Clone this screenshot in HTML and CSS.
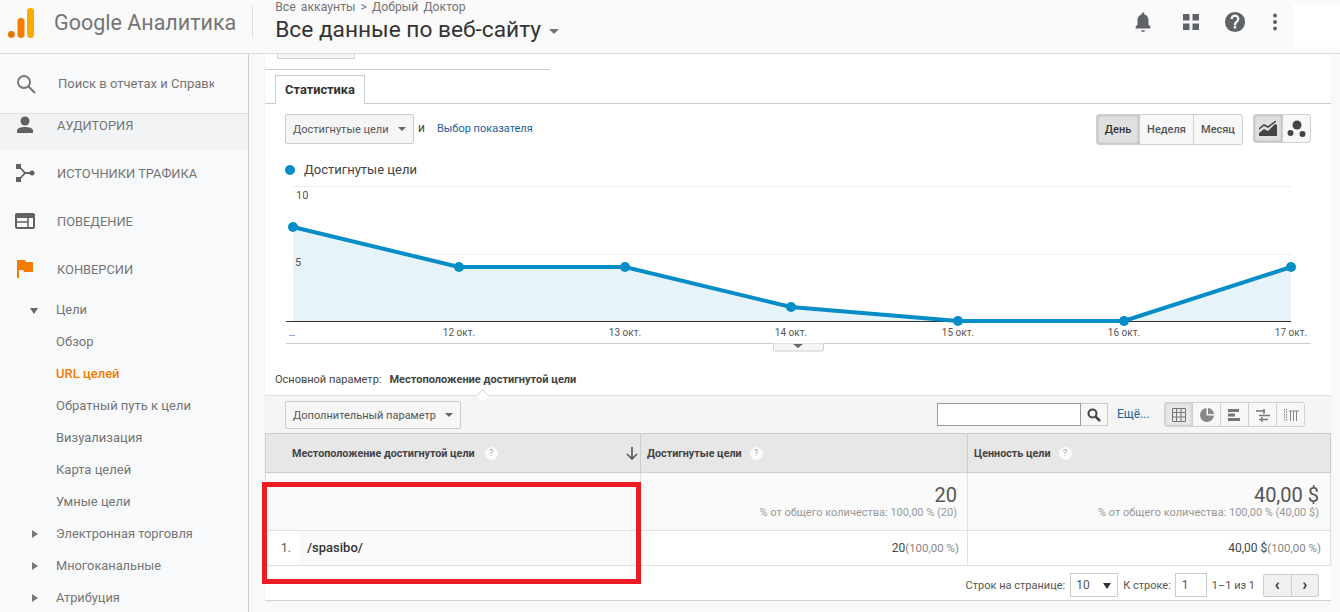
FILE: index.html
```html
<!DOCTYPE html>
<html lang="ru">
<head>
<meta charset="utf-8">
<title>Google Аналитика</title>
<link rel="stylesheet" href="styles.css">
</head>
<body>
<header class="topbar">
  <svg class="logo" viewBox="0 0 26 30" width="26" height="30"><circle cx="3.4" cy="26.4" r="3.4" fill="#e37400"/><rect x="9.5" y="10" width="7" height="20" rx="3.4" fill="#f57c00"/><rect x="19" y="0" width="7" height="30" rx="3.4" fill="#f9ab00"/></svg>
  <span class="brand">Google Аналитика</span>
  <div class="divider"></div>
  <div class="account">
    <div class="crumbs">Все аккаунты &gt; Добрый Доктор</div>
    <div class="view-name">Все данные по веб-сайту <span class="caret-big"></span></div>
  </div>
  <div class="top-icons">
    <svg width="22" height="24" viewBox="0 0 24 24"><path fill="#5f6368" d="M12 23a2.2 2.2 0 0 0 2.2-2h-4.4A2.2 2.2 0 0 0 12 23zm8-6-2-2V10c0-3-1.600-5.500-4.500-6.200V3a1.500 1.500 0 0 0-3 0v.8C7.600 4.500 6 7 6 10v5l-2 2v2h16z"/></svg>
    <svg class="apps" width="18" height="18" viewBox="0 0 18 18"><path fill="#5f6368" d="M1 1h6.500v6.500H1zM10.500 1H17v6.500h-6.500zM1 10.500h6.500V17H1zM10.500 10.500H17V17h-6.500z"/></svg>
    <svg width="22" height="22" viewBox="0 0 24 24"><path fill="#5f6368" d="M12 1a11 11 0 1 0 0 22 11 11 0 0 0 0-22zm1.300 18h-2.600v-2.600h2.600zm2.500-7.700-1.100 1.200c-.9.900-1.400 1.600-1.400 3h-2.600v-.6c0-1.200.5-2.200 1.400-3.100l1.500-1.500c.5-.4.700-1 .7-1.700a2.300 2.300 0 0 0-4.600 0H7.200a4.800 4.800 0 0 1 9.600 0c0 1.100-.4 2-1 2.700z"/></svg>
    <svg width="6" height="18" viewBox="0 0 6 18"><circle cx="3" cy="2.500" r="2" fill="#5f6368"/><circle cx="3" cy="9" r="2" fill="#5f6368"/><circle cx="3" cy="15.500" r="2" fill="#5f6368"/></svg>
  </div>
  <div class="user-box"></div>
</header>
<div class="page">
  <aside class="sidebar">
    <div class="search-row">
      <svg width="20" height="20" viewBox="0 0 20 20"><circle cx="8" cy="8" r="6" fill="none" stroke="#757575" stroke-width="1.800"/><path d="M12.500 12.500 19 19" stroke="#757575" stroke-width="2"/></svg>
      <span class="search-text">Поиск в отчетах и Справк</span>
    </div>
    <div class="nav-top nav-clipped">
      <svg width="18" height="18" viewBox="0 0 18 18"><circle cx="9" cy="5" r="4.500" fill="#616161"/><path fill="#616161" d="M1 17v-2.500C1 12 5.500 11 9 11s8 1 8 3.500V17z"/></svg>
      <span>АУДИТОРИЯ</span>
    </div>
    <div class="nav-top">
      <svg width="20" height="20" viewBox="0 0 20 20"><path fill="none" stroke="#616161" stroke-width="1.800" d="M4 3.500 10 10l-6 6.500M10 10h7"/><rect x="1" y="1" width="5" height="5" fill="#616161"/><rect x="1" y="14" width="5" height="5" fill="#616161"/><circle cx="17" cy="10" r="2.500" fill="#616161"/></svg>
      <span>ИСТОЧНИКИ ТРАФИКА</span>
    </div>
    <div class="nav-top">
      <svg width="20" height="18" viewBox="0 0 20 18"><rect x="1" y="2" width="18" height="14" rx="1" fill="none" stroke="#616161" stroke-width="2"/><path fill="#616161" d="M1 2h18v4H1z"/><path stroke="#616161" stroke-width="1.500" d="M13 6v9M2 10h11"/></svg>
      <span>ПОВЕДЕНИЕ</span>
    </div>
    <div class="nav-top">
      <svg width="20" height="20" viewBox="0 0 20 20"><path fill="#f57c00" d="M2 1h2v18H2zM4 1h6l1 2h7v10H9l-1-2H4z"/></svg>
      <span>КОНВЕРСИИ</span>
    </div>
    <div class="nav-sub has-arrow"><i class="tri-down"></i>Цели</div>
    <div class="nav-sub">Обзор</div>
    <div class="nav-sub active">URL целей</div>
    <div class="nav-sub">Обратный путь к цели</div>
    <div class="nav-sub">Визуализация</div>
    <div class="nav-sub">Карта целей</div>
    <div class="nav-sub">Умные цели</div>
    <div class="nav-sub has-arrow"><i class="tri-right"></i>Электронная торговля</div>
    <div class="nav-sub has-arrow"><i class="tri-right"></i>Многоканальные</div>
    <div class="nav-sub has-arrow"><i class="tri-right"></i>Атрибуция</div>
  </aside>
  <main class="content">
    <section class="panel">
      <div class="stub"><div class="stub-btn"></div></div>
      <div class="tabs"><div class="tab">Статистика</div></div>
      <div class="controls">
        <div class="metric-pick">
          <div class="select select-metric">Достигнутые цели<i class="caret"></i></div>
          <span class="and">и</span>
          <a class="link">Выбор показателя</a>
        </div>
        <div class="toggles">
          <div class="btn-group">
            <div class="seg seg-day on">День</div>
            <div class="seg seg-week">Неделя</div>
            <div class="seg seg-month">Месяц</div>
          </div>
          <div class="btn-group chart-types">
            <div class="seg seg-icon on"><svg width="18" height="15" viewBox="0 0 18 15"><path fill="#444" d="M0 15V12l5-4 4 2 7-7 2 1v11z"/><path fill="none" stroke="#444" stroke-width="1.500" d="M0 8l5-4 4 2 8-6"/></svg></div>
            <div class="seg seg-icon"><svg width="20" height="18" viewBox="0 0 20 18"><circle cx="10" cy="5" r="4.500" fill="#444"/><circle cx="3.500" cy="13" r="3" fill="#444"/><circle cx="15.500" cy="14" r="3" fill="#444"/></svg></div>
          </div>
        </div>
      </div>
      <div class="legend"><i class="dot"></i>Достигнутые цели</div>
      <svg class="chart" viewBox="265 180 1066 172" width="1066" height="172">
        <path d="M293 186.500H1291M293 254.500H1291" stroke="#eee" stroke-width="1"/>
        <path d="M293 227 459 267H625L791 307 958 321H1124L1291 267V321H293Z" fill="#e6f3f9"/>
        <path d="M286 321.500H1291" stroke="#333" stroke-width="1"/>
        <path d="M293 227 459 267H625L791 307 958 321H1124L1291 267" fill="none" stroke="#058dc7" stroke-width="4"/>
        <g fill="#058dc7">
          <circle cx="293" cy="227" r="5"/><circle cx="459" cy="267" r="5"/><circle cx="625" cy="267" r="5"/><circle cx="791" cy="307" r="5"/><circle cx="958" cy="321" r="5"/><circle cx="1124" cy="321" r="5"/><circle cx="1291" cy="267" r="5"/>
        </g>
        <g class="chart-y"><text x="296" y="199">10</text><text x="295" y="266">5</text></g>
        <g class="chart-x"><text x="292" y="336">…</text><text x="459" y="336">12 окт.</text><text x="625" y="336">13 окт.</text><text x="791" y="336">14 окт.</text><text x="958" y="336">15 окт.</text><text x="1124" y="336">16 окт.</text><text x="1291" y="336">17 окт.</text></g>
        <path d="M286 343.500H1311" stroke="#ccc"/>
        <path d="M773.500 343.500v6a1.500 1.500 0 0 0 1.500 1.500h47a1.500 1.500 0 0 0 1.500-1.500v-6" fill="#f5f5f5" stroke="#d0d0d0"/>
        <path d="M793 344h10l-5 4z" fill="#666"/>
      </svg>
      <div class="primary-dim"><span class="pd-label">Основной параметр:</span><b>Местоположение достигнутой цели</b></div>
      <div class="table-tools">
        <div class="select select-extra">Дополнительный параметр<i class="caret"></i></div>
        <div class="tools-right">
          <div class="search-box"><div class="search-input"></div><div class="search-btn"><svg width="14" height="14" viewBox="0 0 14 14"><circle cx="5.500" cy="5.500" r="4" fill="none" stroke="#444" stroke-width="2"/><path d="M8.500 8.500 13 13" stroke="#444" stroke-width="2.500"/></svg></div></div>
          <a class="link more">Ещё...</a>
          <div class="btn-group view-types">
            <div class="vt on"><svg width="14" height="14" viewBox="0 0 14 14"><path fill="none" stroke="#777" d="M.5.5h13v13H.5zM.5 4.500h13M.5 9h13M4.500.5v13M9 .5v13"/></svg></div>
            <div class="vt"><svg width="14" height="14" viewBox="0 0 14 14"><path fill="#888" d="M6.500 0v7.500H14A7 7 0 1 1 6.500 0z"/><path fill="#888" d="M8 0a6.500 6.500 0 0 1 6 6H8z"/></svg></div>
            <div class="vt"><svg width="14" height="14" viewBox="0 0 14 14"><path fill="#777" d="M0 1h11v3H0zM0 5.500h7v3H0zM0 10h12v3H0z"/></svg></div>
            <div class="vt"><svg width="14" height="14" viewBox="0 0 14 14"><path fill="none" stroke="#777" stroke-width="1.500" d="M0 3h9M8 1v5M3 7.500h11M6 9v5M3 11.500h9"/></svg></div>
            <div class="vt"><svg width="16" height="12" viewBox="0 0 16 12"><path fill="none" stroke="#888" stroke-dasharray="1.500 1" d="M1.500 0v12M3.500 0v12"/><path fill="none" stroke="#888" d="M6 2h10M7.500 2v10M10.500 2v10M13.500 2v10"/></svg></div>
          </div>
        </div>
      </div>
      <div class="table">
        <div class="th th-dim"><span>Местоположение достигнутой цели</span><i class="hint">?</i><svg class="sort" width="12" height="13" viewBox="0 0 12 13"><path fill="none" stroke="#555" stroke-width="1.600" d="M6 0v12M1 7l5 5 5-5"/></svg></div>
        <div class="th"><span>Достигнутые цели</span><i class="hint">?</i></div>
        <div class="th"><span>Ценность цели</span><i class="hint">?</i></div>
        <div class="td-total td-empty"></div>
        <div class="td-total"><div class="big">20</div><div class="small">% от общего количества: 100,00 % (20)</div></div>
        <div class="td-total"><div class="big">40,00 $</div><div class="small">% от общего количества: 100,00 % (40,00 $)</div></div>
        <div class="td-row td-name"><span class="idx">1.</span><span class="path">/spasibo/</span></div>
        <div class="td-row td-val">20<small>(100,00 %)</small></div>
        <div class="td-row td-val">40,00 $<small>(100,00 %)</small></div>
      </div>
      <div class="pager">
        <span>Строк на странице:</span>
        <div class="pager-select">10<i class="pager-caret"></i></div>
        <span>К строке:</span>
        <div class="pager-input">1</div>
        <span class="pager-range">1–1 из 1</span>
        <div class="pager-nav"><div>&#8249;</div><div>&#8250;</div></div>
      </div>
    </section>
  </main>
</div>
<div class="red-frame"></div>
</body>
</html>
```
FILE: styles.css
```css
* { box-sizing: border-box; }
html, body { margin: 0; height: 612px; overflow: hidden; }
body { font-family: Roboto, "Liberation Sans", sans-serif; color: #444; background: #f8f9fa; position: relative; }
i { font-style: normal; display: block; }

.topbar { height: 54px; background: #fafafa; border-bottom: 1px solid #dcdcdc; display: flex; align-items: flex-start; position: relative; }
.logo { margin: 8px 0 0 8px; flex: none; }
.brand { margin: 10px 0 0 20px; font-size: 21.5px; line-height: 26px; color: #757575; white-space: nowrap; }
.divider { width: 1px; height: 32px; background: #e0e0e0; margin: 6px 0 0 16px; }
.account { margin-left: 22px; }
.crumbs { font-size: 12.25px; line-height: 14px; color: #757575; word-spacing: 2px; }
.view-name { font-size: 22.7px; line-height: 28px; margin-top: 2px; color: #333; white-space: nowrap; display: flex; align-items: center; }
.caret-big { width: 0; height: 0; margin: 2px 0 0 8px; border: 5px solid transparent; border-top-color: #757575; border-bottom: 0; }
.top-icons { margin-left: auto; height: 44px; display: flex; align-items: center; gap: 26px; }
.apps { margin: 0 -2px 0 2px; }
.user-box { width: 47px; height: 43px; margin: 4px 0 0 15px; background: #fff; }

.page { display: flex; height: 558px; overflow: hidden; }
.sidebar { width: 249px; flex: none; background: #f8f9fa; border-right: 1px solid #ccc; overflow: hidden; }
.search-row { height: 60px; display: flex; align-items: center; padding-left: 16px; border-bottom: 1px solid #e0e0e0; }
.search-text { margin-left: 22px; width: 156px; overflow: hidden; white-space: nowrap; font-size: 13px; color: #757575; }
.nav-top { height: 48px; display: flex; align-items: center; padding: 0 0 2px 15px; font-size: 12.85px; color: #757575; }
.nav-top svg { width: 20px; flex: none; }
.nav-top span { margin-left: 22px; }
.nav-clipped { height: 36px; background: #f1f3f4; padding-bottom: 14px; }
.nav-sub { height: 32px; line-height: 32px; padding-left: 56px; font-size: 13px; color: #757575; position: relative; }
.nav-sub.active { color: #f57c00; font-weight: 500; }
.has-arrow { font-size: 12.8px; }
.tri-down { position: absolute; left: 30px; top: 14px; border: 4px solid transparent; border-top: 6px solid #666; border-bottom: 0; }
.tri-right { position: absolute; left: 32px; top: 12px; border: 4px solid transparent; border-left: 6px solid #777; border-right: 0; }

.content { flex: 1; padding: 0 9px 0 16px; min-width: 0; }
.panel { background: #fff; height: 546px; box-shadow: 0 1px 1px rgba(0,0,0,.15); display: flex; flex-direction: column; }
.stub { height: 16px; width: 285px; flex: none; border-bottom: 1px solid #ccc; padding-left: 12px; }
.stub-btn { width: 78px; height: 5px; background: #f5f5f5; border: 1px solid #d0d0d0; border-top: 0; border-radius: 0 0 2px 2px; }
.tabs { height: 29px; margin-top: 5px; padding-left: 10px; border-bottom: 1px solid #ccc; flex: none; }
.tab { width: 90px; height: 29px; background: #fff; border: 1px solid #ccc; border-bottom: 0; font-size: 12.8px; font-weight: 700; color: #333; line-height: 28px; text-align: center; }
.controls { height: 46px; padding: 10px 20px 0; display: flex; justify-content: space-between; flex: none; }
.metric-pick { display: flex; align-items: flex-start; }
.select { height: 30px; background: #f5f5f5; border: 1px solid #ccc; border-radius: 2px; font-size: 11px; color: #555; display: flex; align-items: center; padding-left: 7px; white-space: nowrap; }
.select-metric { width: 129px; justify-content: space-between; padding-right: 7px; }
.caret { border: 4px solid transparent; border-top: 4px solid #666; border-bottom: 0; }
.and { font-size: 12px; margin: 5px 0 0 4px; color: #444; line-height: 18px; }
.link { color: #1a5e9a; font-size: 11px; }
.metric-pick .link { margin: 8px 0 0 12px; line-height: 14px; }
.toggles { display: flex; align-items: flex-start; gap: 10px; }
.btn-group { display: flex; border: 1px solid #d0d0d0; border-radius: 3px; background: #f7f7f7; overflow: hidden; }
.seg { height: 29px; font-size: 11px; font-weight: 500; color: #555; display: flex; align-items: center; justify-content: center; border-left: 1px solid #d0d0d0; }
.seg:first-child { border-left: 0; }
.seg.on { background: #e0e0e0; box-shadow: inset 0 0 3px rgba(0,0,0,.3); color: #333; }
.seg-day { width: 42px; }
.seg-week { width: 54px; }
.seg-month { width: 49px; }
.seg-icon { width: 28px; height: 27px; }
.legend { height: 30px; flex: none; display: flex; align-items: center; padding: 9px 0 0 20px; font-size: 13px; color: #444; }
.dot { width: 10px; height: 10px; border-radius: 50%; background: #058dc7; margin-right: 9px; }
.chart { display: block; flex: none; }
.chart-y text { font-size: 11px; fill: #555; font-family: Roboto, sans-serif; }
.chart-x text { font-size: 10px; fill: #555; text-anchor: middle; font-family: Roboto, sans-serif; }
.primary-dim { height: 43px; flex: none; padding: 14px 0 0 10px; font-size: 11px; line-height: 28px; color: #444; white-space: nowrap; }
.primary-dim b { font-weight: 700; margin-left: 8px; color: #444; }
.table-tools { height: 38px; flex: none; background: #f5f5f5; border-top: 1px solid #e0e0e0; padding: 5px 26px 0 20px; display: flex; justify-content: space-between; align-items: flex-start; position: relative; }
.table-tools::before { content: ""; position: absolute; left: 213px; top: -5px; width: 8px; height: 8px; background: #fff; border-top: 1px solid #d8d8d8; border-left: 1px solid #d8d8d8; transform: rotate(45deg); }
.select-extra { width: 176px; height: 28px; background: #f7f7f7; justify-content: space-between; padding-right: 7px; }
.tools-right { display: flex; align-items: flex-start; }
.search-box { display: flex; margin-top: 2px; }
.search-input { width: 144px; height: 23px; background: #fff; border: 1px solid #999; }
.search-btn { width: 27px; height: 23px; background: #f7f7f7; border: 1px solid #ccc; border-left: 0; display: flex; align-items: center; justify-content: center; }
.more { font-size: 12px; margin: 5px 14px 0 9px; line-height: 16px; width: 33px; white-space: nowrap; }
.view-types { width: 141px; height: 25px; margin-top: 1px; }
.vt { flex: 1; height: 23px; display: flex; align-items: center; justify-content: center; border-left: 1px solid #d0d0d0; }
.vt:first-child { border-left: 0; }
.vt.on { background: #e8e8e8; box-shadow: inset 0 0 3px rgba(0,0,0,.2); }

.table { display: grid; grid-template-columns: 375px 327px 1fr; grid-template-rows: 40px 58px 34px; flex: none; border-bottom: 1px solid #e0e0e0; }
.th { background: #e7e7e7; border-top: 1px solid #ccc; border-bottom: 1px solid #ccc; border-left: 1px solid #ccc; font-size: 10.75px; font-weight: 700; color: #444; display: flex; align-items: center; padding-left: 6px; position: relative; white-space: nowrap; }
.th:nth-child(3) { border-right: 1px solid #ccc; }
.th-dim { padding-left: 26px; }
.hint { width: 13px; height: 13px; border-radius: 50%; background: #fafafa; color: #aaa; font-size: 9px; font-weight: 400; line-height: 13px; text-align: center; margin-left: 8px; }
.th-dim .hint { margin-left: 10px; }
.sort { position: absolute; right: 2px; top: 13px; }
.td-total { background: #fafafa; border-left: 1px solid #e0e0e0; border-bottom: 1px solid #e0e0e0; text-align: right; padding: 11px 10px 0 0; }
.td-total:nth-child(6) { border-right: 1px solid #e0e0e0; padding-right: 11px; }
.big { font-size: 20px; line-height: 22px; color: #555; }
.small { font-size: 11px; line-height: 13px; color: #999; }
.td-row { height: 34px; font-size: 12px; color: #444; }
.td-name { display: flex; align-items: stretch; }
.idx { width: 35px; padding-left: 16px; line-height: 34px; color: #555; background: #fff; }
.path { flex: 1; padding-left: 7px; line-height: 34px; background: #fafafa; font-size: 13px; font-weight: 500; color: #333; }
.td-val { text-align: right; line-height: 34px; padding-right: 8px; border-left: 1px solid #e0e0e0; }
.td-val:last-child { border-right: 1px solid #e0e0e0; padding-right: 9px; }
.td-val small { font-size: 11.5px; color: #888; }
.pager { height: 33px; flex: none; display: flex; justify-content: flex-end; align-items: center; padding: 5px 12px 0 0; font-size: 11px; color: #555; }
.pager-select { width: 48px; height: 24px; margin: 0 5px; border: 1px solid #ccc; font-size: 12px; line-height: 23px; padding-left: 5px; position: relative; }
.pager-caret { position: absolute; right: 6px; top: 9px; border: 4px solid transparent; border-top: 6px solid #333; border-bottom: 0; }
.pager-input { width: 32px; height: 24px; margin-left: 4px; border: 1px solid #ccc; font-size: 12px; line-height: 23px; padding-left: 6px; }
.pager-range { margin: 0 8px 0 5px; }
.pager-nav { display: flex; width: 56px; height: 23px; border: 1px solid #ccc; border-radius: 2px; background: #f0f0f0; font-size: 17px; line-height: 18px; font-weight: 700; color: #333; text-align: center; }
.pager-nav div { flex: 1; }
.pager-nav div + div { border-left: 1px solid #ccc; }

.red-frame { position: absolute; left: 262px; top: 482px; width: 379px; height: 102px; border: 5px solid #ed1c24; }
```
